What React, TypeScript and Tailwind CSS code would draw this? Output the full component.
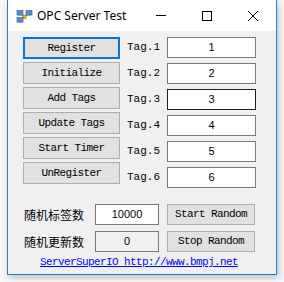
import React from 'react';

const mono = "font-['Liberation_Mono',monospace]";

function WinButton({ label, focused }: { label: string; focused?: boolean }) {
  return (
    <button
      className={`h-[22px] w-[97px] bg-[#e1e1e1] text-[11px] tracking-[-0.6px] text-black ${mono} ${
        focused ? 'border-2 border-[#0078d7]' : 'border border-[#adadad]'
      }`}
    >
      {label}
    </button>
  );
}

function TagRow({ n, active }: { n: number; active?: boolean }) {
  return (
    <div className="flex h-[21px] items-center">
      <span className={`w-[40px] text-[11px] text-black ${mono}`}>Tag.{n}</span>
      <div
        className={`flex h-[21px] w-[89px] items-center justify-center bg-white text-[11px] text-black font-['Liberation_Sans',sans-serif] border ${
          active ? 'border-[#1e1e1e]' : 'border-[#7a7a7a]'
        }`}
      >
        {n}
      </div>
    </div>
  );
}

function NetIcon() {
  return (
    <svg width="17" height="13" viewBox="0 0 17 13">
      <path d="M4 4 L8.5 7 L13 4 M8.5 7 L4 10" stroke="#c08a10" strokeWidth="1.2" fill="none" />
      <rect x="7" y="5.5" width="3" height="3" fill="#f5b400" stroke="#8a5a00" strokeWidth="0.5" />
      <rect x="1" y="0.5" width="6" height="4.5" fill="#5b8ed8" stroke="#2d5aa8" strokeWidth="0.6" />
      <rect x="10" y="0.5" width="6" height="4.5" fill="#5b8ed8" stroke="#2d5aa8" strokeWidth="0.6" />
      <rect x="1" y="7.5" width="6" height="4.5" fill="#5b8ed8" stroke="#2d5aa8" strokeWidth="0.6" />
      <rect x="2" y="5" width="4" height="1" fill="#9aa4b0" />
      <rect x="11" y="5" width="4" height="1" fill="#9aa4b0" />
      <rect x="2" y="12" width="4" height="1" fill="#9aa4b0" />
    </svg>
  );
}

export default function App() {
  const buttons = ['Register', 'Initialize', 'Add Tags', 'Update Tags', 'Start Timer', 'UnRegister'];
  return (
    <div className="h-[282px] w-[284px] overflow-hidden bg-[#f8f8f8]">
      <div className="ml-[7px] h-[275px] w-[270px] border-x border-b border-[#1c81d6] bg-[#f0f0f0] shadow-[2px_3px_7px_rgba(0,0,0,0.22)]">
        {/* title bar */}
        <div className="flex h-[31px] items-center bg-white">
          <div className="ml-[8px] mt-[1px]">
            <NetIcon />
          </div>
          <span className="ml-[4px] text-[12px] text-black font-['Noto_Sans',sans-serif]">OPC Server Test</span>
          <div className="ml-auto flex h-full">
            <div className="flex w-[46px] items-center justify-center">
              <div className="h-px w-[10px] bg-black" />
            </div>
            <div className="flex w-[46px] items-center justify-center">
              <div className="h-[10px] w-[10px] border border-black" />
            </div>
            <div className="flex w-[46px] items-center justify-center">
              <svg width="10" height="10" viewBox="0 0 10 10">
                <path d="M0 0 L10 10 M10 0 L0 10" stroke="#000" strokeWidth="1" />
              </svg>
            </div>
          </div>
        </div>

        {/* body */}
        <div className="pt-[6px]">
          <div className="flex pl-[15px]">
            <div className="flex flex-col gap-[3px]">
              {buttons.map((b, i) => (
                <WinButton key={b} label={b} focused={i === 0} />
              ))}
            </div>
            <div className="ml-[7px] flex flex-col gap-[5px]">
              {[1, 2, 3, 4, 5, 6].map(n => (
                <TagRow key={n} n={n} active={n === 3} />
              ))}
            </div>
          </div>

          <div className="mt-[16px] flex flex-col gap-[6px] pl-[16px]">
            <div className="flex h-[21px] items-center">
              <span className="w-[71px] text-[12px] leading-[16px] text-black font-['Noto_Sans_CJK_SC',sans-serif]">随机标签数</span>
              <div className="flex h-[21px] w-[64px] items-center justify-center border border-[#7a7a7a] bg-white text-[11px] font-['Liberation_Sans',sans-serif]">
                10000
              </div>
              <button className={`ml-[8px] h-[21px] w-[88px] border border-[#adadad] bg-[#e1e1e1] text-[11px] tracking-[-0.6px] ${mono}`}>
                Start Random
              </button>
            </div>
            <div className="flex h-[21px] items-center">
              <span className="w-[71px] text-[12px] leading-[16px] text-black font-['Noto_Sans_CJK_SC',sans-serif]">随机更新数</span>
              <div className="flex h-[21px] w-[64px] items-center justify-center border border-[#7a7a7a] bg-[#f0f0f0] text-[11px] font-['Liberation_Sans',sans-serif]">
                0
              </div>
              <button className={`ml-[8px] h-[21px] w-[88px] border border-[#adadad] bg-[#e1e1e1] text-[11px] tracking-[-0.6px] ${mono}`}>
                Stop Random
              </button>
            </div>
          </div>

          <div className={`mt-[4px] pl-[32px] text-[11px] leading-[13px] ${mono}`}>
            <a className="tracking-[-0.6px] text-[#0000ff] underline">ServerSuperIO http://www.bmpj.net</a>
          </div>
        </div>
      </div>
    </div>
  );
}
